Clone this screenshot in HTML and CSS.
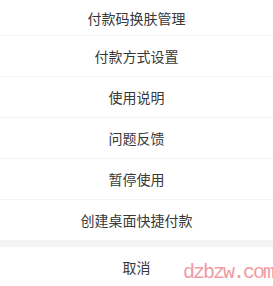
FILE: index.html
```html
<!DOCTYPE html>
<html lang="zh">
<head>
<meta charset="utf-8">
<link rel="stylesheet" href="styles.css">
</head>
<body>
<div class="sheet">
  <ul class="menu">
    <li class="item first">付款码换肤管理</li>
    <li class="item">付款方式设置</li>
    <li class="item">使用说明</li>
    <li class="item">问题反馈</li>
    <li class="item">暂停使用</li>
    <li class="item last">创建桌面快捷付款</li>
  </ul>
  <div class="gap"></div>
  <div class="cancel">取消</div>
  <div class="watermark">dzbzw.com</div>
</div>
</body>
</html>
```
FILE: styles.css
```css
html, body {
  margin: 0;
  padding: 0;
  background: #ffffff;
}
body {
  font-family: "Noto Sans CJK SC", "Noto Sans", sans-serif;
  color: #383838;
}
.sheet {
  position: relative;
  width: 273px;
  height: 286px;
  overflow: hidden;
}
.menu {
  list-style: none;
  margin: 0;
  padding: 0;
}
.item {
  height: 40px;
  display: flex;
  align-items: center;
  justify-content: center;
  font-size: 14px;
  border-bottom: 1px solid #f3f3f3;
}
.item.first {
  height: 35px;
}
.item.last {
  border-bottom: none;
}
.gap {
  height: 7px;
  background: #f4f4f4;
}
.cancel {
  height: 40px;
  display: flex;
  align-items: center;
  justify-content: center;
  font-size: 14px;
}
.watermark {
  position: absolute;
  left: 183px;
  top: 261px;
  font-family: "Liberation Mono", monospace;
  font-size: 20px;
  letter-spacing: -2px;
  color: #f09aa4;
  line-height: 24px;
}
```
